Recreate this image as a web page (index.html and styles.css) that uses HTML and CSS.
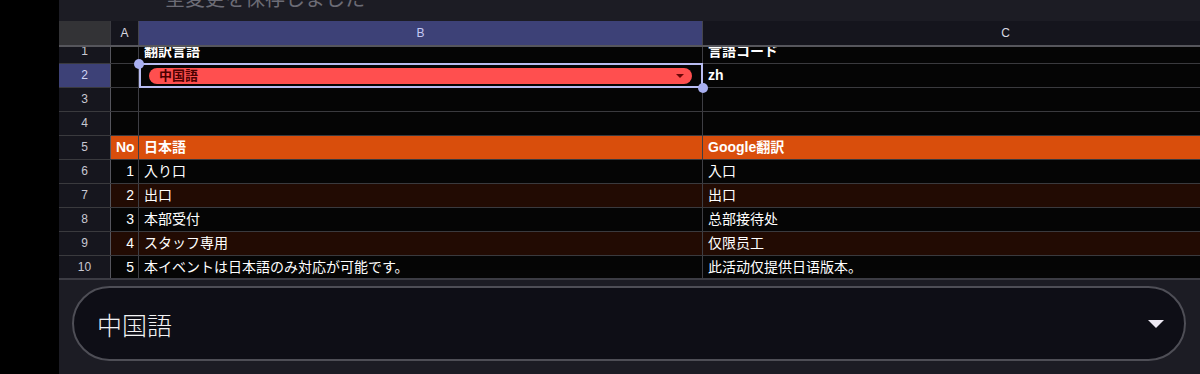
FILE: index.html
```html
<!DOCTYPE html>
<html lang="ja">
<head>
<meta charset="utf-8">
<title>翻訳シート</title>
<link rel="stylesheet" href="styles.css">
</head>
<body>
<div class="app">
  <aside class="rail"></aside>
  <main class="panel">
    <div class="status"><span>全変更を保存しました</span></div>

    <div class="sheet">
      <div class="row colhead">
        <div class="corner"></div>
        <div class="hcell">A</div>
        <div class="hcell sel">B</div>
        <div class="hcell">C</div>
      </div>

      <div class="viewport">
        <div class="rows">
          <div class="row">
            <div class="num">1</div><div class="cell"></div>
            <div class="cell bold">翻訳言語</div><div class="cell bold">言語コード</div>
          </div>
          <div class="row">
            <div class="num sel">2</div><div class="cell"></div>
            <div class="cell active">
              <div class="chip"><span>中国語</span><i class="chip-caret"></i></div>
              <div class="selbox"></div>
              <b class="handle tl"></b><b class="handle br"></b>
            </div>
            <div class="cell bold">zh</div>
          </div>
          <div class="row">
            <div class="num">3</div><div class="cell"></div><div class="cell"></div><div class="cell"></div>
          </div>
          <div class="row">
            <div class="num">4</div><div class="cell"></div><div class="cell"></div><div class="cell"></div>
          </div>
          <div class="row head">
            <div class="num">5</div><div class="cell bold right">No</div>
            <div class="cell bold">日本語</div><div class="cell bold">Google翻訳</div>
          </div>
          <div class="row">
            <div class="num">6</div><div class="cell right">1</div>
            <div class="cell">入り口</div><div class="cell">入口</div>
          </div>
          <div class="row alt">
            <div class="num">7</div><div class="cell right">2</div>
            <div class="cell">出口</div><div class="cell">出口</div>
          </div>
          <div class="row">
            <div class="num">8</div><div class="cell right">3</div>
            <div class="cell">本部受付</div><div class="cell">总部接待处</div>
          </div>
          <div class="row alt">
            <div class="num">9</div><div class="cell right">4</div>
            <div class="cell">スタッフ専用</div><div class="cell">仅限员工</div>
          </div>
          <div class="row">
            <div class="num">10</div><div class="cell right">5</div>
            <div class="cell">本イベントは日本語のみ対応が可能です。</div><div class="cell">此活动仅提供日语版本。</div>
          </div>
        </div>
      </div>
    </div>

    <div class="picker">
      <div class="pill">
        <span class="pill-text">中国語</span>
        <i class="pill-caret"></i>
      </div>
    </div>
  </main>
</div>
</body>
</html>
```

FILE: styles.css
```css
html, body { margin:0; padding:0; background:#000; }
body { font-family:"Liberation Sans", "Noto Sans CJK JP", sans-serif; color:#fff; }

.app { display:flex; width:1200px; height:374px; overflow:hidden; }
.rail { width:59px; flex:none; background:#000; }
.panel { flex:1; min-width:0; display:flex; flex-direction:column; background:#1c1c24; overflow:hidden; }

/* saved status, scrolled mostly out of view */
.status { height:21px; flex:none; overflow:hidden; padding-left:106px; }
.status span { display:block; margin-top:-15px; font-size:20px; line-height:28px; color:#6c6c76; white-space:nowrap; }

/* sheet grid */
.sheet { flex:none; }
.row { display:grid; grid-template-columns:52px 28px 564px 606px; height:24px; }
.colhead { height:26px; border-bottom:2px solid #56565c; box-sizing:border-box; }
.corner { background:#333336; border-right:1px solid #3a3a40; }
.hcell { background:#15151d; color:#d8d8e0; font-size:12px; line-height:24px; text-align:center; border-right:1px solid #45454c; }
.hcell.sel { background:#3d4177; color:#c4c8f4; }

.viewport { height:231px; overflow:hidden; border-bottom:2px solid #3c3c44; }
.rows { margin-top:-7px; }
.rows .row { box-sizing:border-box; border-bottom:1px solid #3a3a3e; background:#050505; }
.rows .row.alt { background:#220b03; }
.rows .row.head { background:#d94e0c; }

.num { background:#16161e; color:#c8c8d2; font-size:12px; line-height:23px; text-align:center; border-right:1px solid #55555c; }
.num.sel { background:#3d4177; color:#d0d4f6; }
.cell { font-size:14px; line-height:23px; padding:0 4px 0 5px; white-space:nowrap; overflow:visible; border-right:1px solid #3e3e44; }
.cell.bold { font-weight:bold; }
.cell.right { text-align:right; padding-right:4px; }

/* active dropdown cell */
.cell.active { position:relative; padding:0; }
.chip { display:flex; align-items:center; justify-content:space-between; margin:4px 10px 0 10px; height:16px; border-radius:8px; background:#ff4f4f; padding:0 8px 0 10px; }
.chip span { color:#4c0000; font-size:13px; font-weight:bold; line-height:16px; }
.chip-caret { width:0; height:0; border-left:4px solid transparent; border-right:4px solid transparent; border-top:4px solid #6a0808; }
.selbox { position:absolute; left:0; top:-1px; right:-1px; bottom:-1px; border:2px solid #b8bcf2; }
.handle { position:absolute; width:10px; height:10px; border-radius:50%; background:#a8aff0; }
.handle.tl { left:-5px; top:-5px; }
.handle.br { right:-6px; bottom:-6px; }

/* language picker */
.picker { flex:1; padding:6px 14px 0 13px; }
.pill { display:flex; align-items:center; justify-content:space-between; height:75px; box-sizing:border-box; border:2px solid #4e4e56; border-radius:38px; background:#0e0e16; padding:0 20px 0 23px; }
.pill-text { font-size:25px; color:#f2f2f4; font-family:"Noto Sans CJK JP", sans-serif; font-weight:300; }
.pill-caret { width:0; height:0; border-left:8px solid transparent; border-right:8px solid transparent; border-top:8px solid #eeeaf4; }
```
